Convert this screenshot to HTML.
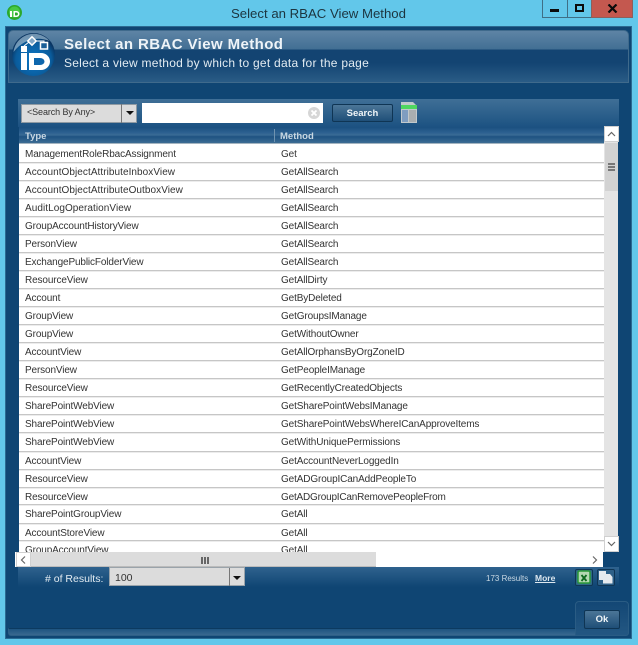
<!DOCTYPE html>
<html>
<head>
<meta charset="utf-8">
<style>
html,body{margin:0;padding:0;width:638px;height:645px;overflow:hidden;background:#62c7ea;font-family:"Liberation Sans",sans-serif;}
.a{position:absolute;box-sizing:border-box;}
.t{position:absolute;white-space:nowrap;}
.row{position:absolute;left:0;width:585px;height:18px;box-sizing:border-box;border-bottom:1px solid #c6c6c6;box-shadow:0 1px 0 #ececec;font-size:10px;color:#333;letter-spacing:-.13px;line-height:18px;white-space:nowrap;}
.row span{position:absolute;top:1px;}
.row span:first-child{left:6px;}
.row span:last-child{left:262px;}
.w span:first-child{letter-spacing:.06px;}
</style>
</head>
<body>
<div class="a" style="left:0;top:0;width:638px;height:645px;overflow:hidden">
<!-- title bar -->
<svg class="a" style="left:6px;top:4px" width="17" height="17" viewBox="0 0 17 17"><circle cx="8.500" cy="8.500" r="7.500" fill="#2ca82c"/><circle cx="8.500" cy="8" r="5.500" fill="#47c944"/><rect x="4" y="7" width="2" height="6" fill="#fff"/><path d="M7.500 7h3a3 3 0 0 1 0 6h-3z" fill="#fff"/><path d="M9 8.500h1.400a1.500 1.500 0 0 1 0 3H9z" fill="#2ca82c"/></svg>
<div class="t" style="left:231px;top:5px;font-size:13.200px;color:#1c3540;line-height:17px">Select an RBAC View Method</div>
<div class="a" style="left:542px;top:0;width:91px;height:18px;background:#62c7ea;border:1px solid #3f6f86;border-top:0"></div>
<div class="a" style="left:567px;top:0;width:1px;height:18px;background:#3f6f86"></div>
<div class="a" style="left:591px;top:0;width:42px;height:18px;background:#c4584f;border:1px solid #8c5f5c;border-top:0"></div>
<div class="a" style="left:550px;top:9px;width:9px;height:3px;background:#0b0b0b"></div>
<div class="a" style="left:575px;top:4px;width:9px;height:8px;border:2px solid #0b0b0b"></div>
<svg class="a" style="left:607px;top:4px" width="11" height="9" viewBox="0 0 11 9"><path d="M1.500 .5L9.500 8.500M9.500 .5L1.500 8.500" stroke="#0b0b0b" stroke-width="2.200" fill="none"/></svg>

<!-- window body -->
<div class="a" style="left:5px;top:26px;width:627px;height:613px;background:#0f4573;border:1px solid #2b6a92"></div>

<!-- header panel -->
<div class="a" style="left:8px;top:30px;width:621px;height:53px;border-radius:5px 5px 0 0;border:1px solid #3f6a8c;background:linear-gradient(to bottom,#5e84a5 0,#426f94 18px,#134472 19px,#134472 32px,#2b5d87 52px)"></div>
<svg class="a" style="left:11px;top:31px" width="48" height="48" viewBox="0 0 48 48">
<defs><radialGradient id="g" cx=".5" cy=".62" r=".55"><stop offset="0" stop-color="#0d78c8"/><stop offset=".75" stop-color="#0a5c9c"/><stop offset="1" stop-color="#0a3562"/></radialGradient></defs>
<circle cx="22.500" cy="23.500" r="21.500" fill="url(#g)"/>
<path d="M2.500 21a20.500 20.500 0 0 1 36-11c-12-5-26-2-36 11z" fill="#a9c7dc" opacity=".65"/>
<path d="M13 15L18 11M24 10h9v2" stroke="#fff" stroke-width="1" fill="none"/>
<rect x="10" y="15" width="6" height="6" fill="#fff"/>
<rect x="18" y="7" width="6" height="6" fill="#7fa6c6" stroke="#fff" stroke-width="1.500" transform="rotate(45 21 10)"/>
<rect x="29.500" y="11.500" width="7" height="6.500" fill="#1a5f98" stroke="#fff" stroke-width="1.500"/>
<rect x="10" y="22" width="6" height="17" fill="#fff"/>
<path d="M18 22h12a9 8.500 0 0 1 0 17H18z" fill="#fff"/>
<path d="M23 27h6a4.500 3.500 0 0 1 0 7h-6z" fill="#0d66ad"/>
</svg>
<div class="t" style="left:64px;top:36px;font-size:15px;font-weight:bold;color:#eef4f8;line-height:17px;letter-spacing:.4px">Select an RBAC View Method</div>
<div class="t" style="left:64px;top:56px;font-size:12px;color:#e3ecf2;line-height:14px;letter-spacing:.25px">Select a view method by which to get data for the page</div>

<!-- toolbar -->
<div class="a" style="left:18px;top:99px;width:601px;height:28px;background:linear-gradient(to bottom,#3f6f96,#1c5282)"></div>
<div class="a" style="left:21px;top:104px;width:116px;height:19px;background:#dcdcdc;border:1px solid #8f9aa3"></div>
<div class="a" style="left:121px;top:104px;width:1px;height:19px;background:#777"></div>
<div class="t" style="left:27px;top:106px;font-size:9px;color:#333;line-height:12px;letter-spacing:-.1px">&lt;Search By Any&gt;</div>
<div class="a" style="left:126px;top:111px;width:0;height:0;border:4px solid transparent;border-top:4px solid #111;border-bottom:0"></div>
<div class="a" style="left:142px;top:103px;width:181px;height:20px;background:#fff"></div>
<svg class="a" style="left:307px;top:106px" width="14" height="14" viewBox="0 0 14 14"><circle cx="7" cy="7" r="6" fill="#d6d6d6"/><path d="M4.500 4.500l5 5M9.500 4.500l-5 5" stroke="#fff" stroke-width="1.800"/></svg>
<div class="a" style="left:332px;top:104px;width:61px;height:18px;border:1px solid #0f3554;border-radius:2px;background:linear-gradient(to bottom,#4b7597,#1f4f78);color:#f0f5f8;font-size:9.500px;font-weight:bold;line-height:18px;text-align:center">Search</div>
<svg class="a" style="left:400px;top:101px" width="18" height="23" viewBox="0 0 18 23"><path d="M1 1h12l4 4v17H1z" fill="#c2c9cc"/><rect x="1" y="4" width="16" height="4" fill="#4fd760"/><rect x="2" y="9" width="6" height="12" fill="#7f9dc0"/><rect x="9" y="9" width="7" height="12" fill="#a9aeb0"/></svg>

<!-- table header -->
<div class="a" style="left:19px;top:127px;width:585px;height:17px;background:linear-gradient(to bottom,#1b5080 0,#2c6090 35%,#3a6b95 50%,#1e5282 60%,#3c6c94 100%);border-bottom:1px solid #a4b4c0"></div>
<div class="a" style="left:274px;top:129px;width:1px;height:13px;background:#6f93b0"></div>
<div class="t" style="left:25px;top:131px;font-size:9.500px;font-weight:bold;color:#c9d8e3;line-height:12px">Type</div>
<div class="t" style="left:280px;top:131px;font-size:9.500px;font-weight:bold;color:#c9d8e3;line-height:12px">Method</div>

<!-- rows -->
<div class="a" style="left:19px;top:144px;width:585px;height:408px;overflow:hidden;background:#fff">
<div class="row" style="top:1px"><span>ManagementRoleRbacAssignment</span><span>Get</span></div>
<div class="row w" style="top:19px"><span>AccountObjectAttributeInboxView</span><span>GetAllSearch</span></div>
<div class="row w" style="top:37px"><span>AccountObjectAttributeOutboxView</span><span>GetAllSearch</span></div>
<div class="row w" style="top:55px"><span>AuditLogOperationView</span><span>GetAllSearch</span></div>
<div class="row" style="top:73px"><span>GroupAccountHistoryView</span><span>GetAllSearch</span></div>
<div class="row" style="top:91px"><span>PersonView</span><span>GetAllSearch</span></div>
<div class="row" style="top:109px"><span>ExchangePublicFolderView</span><span>GetAllSearch</span></div>
<div class="row" style="top:127px"><span>ResourceView</span><span>GetAllDirty</span></div>
<div class="row" style="top:145px"><span>Account</span><span>GetByDeleted</span></div>
<div class="row" style="top:163px"><span>GroupView</span><span>GetGroupsIManage</span></div>
<div class="row" style="top:181px"><span>GroupView</span><span>GetWithoutOwner</span></div>
<div class="row" style="top:199px"><span>AccountView</span><span>GetAllOrphansByOrgZoneID</span></div>
<div class="row" style="top:217px"><span>PersonView</span><span>GetPeopleIManage</span></div>
<div class="row" style="top:235px"><span>ResourceView</span><span>GetRecentlyCreatedObjects</span></div>
<div class="row" style="top:253px"><span>SharePointWebView</span><span>GetSharePointWebsIManage</span></div>
<div class="row" style="top:271px"><span>SharePointWebView</span><span>GetSharePointWebsWhereICanApproveItems</span></div>
<div class="row" style="top:289px;height:19px"><span>SharePointWebView</span><span>GetWithUniquePermissions</span></div>
<div class="row" style="top:308px"><span>AccountView</span><span>GetAccountNeverLoggedIn</span></div>
<div class="row" style="top:326px"><span>ResourceView</span><span>GetADGroupICanAddPeopleTo</span></div>
<div class="row" style="top:344px;height:17px"><span>ResourceView</span><span style="letter-spacing:-.2px">GetADGroupICanRemovePeopleFrom</span></div>
<div class="row" style="top:361px;height:19px"><span>SharePointGroupView</span><span>GetAll</span></div>
<div class="row" style="top:380px;height:17px"><span>AccountStoreView</span><span>GetAll</span></div>
<div class="row" style="top:397px;height:11px;border:0;box-shadow:none"><span>GroupAccountView</span><span>GetAll</span></div>
</div>

<!-- vertical scrollbar -->
<div class="a" style="left:604px;top:126px;width:14px;height:426px;background:#e4e4e4"></div>
<div class="a" style="left:604px;top:126px;width:15px;height:16px;background:#fff;border:1px solid #d0d0d0"></div>
<svg class="a" style="left:607px;top:131px" width="9" height="6" viewBox="0 0 9 6"><path d="M1 5l3.500-3.500L8 5" stroke="#666" stroke-width="1.200" fill="none"/></svg>
<div class="a" style="left:605px;top:143px;width:13px;height:48px;background:#d2d2d2"></div>
<div class="a" style="left:608px;top:163px;width:7px;height:8px;background:repeating-linear-gradient(to bottom,#777 0,#777 2px,#d2d2d2 2px,#d2d2d2 3px)"></div>
<div class="a" style="left:604px;top:536px;width:15px;height:16px;background:#fff;border:1px solid #d0d0d0"></div>
<svg class="a" style="left:607px;top:541px" width="9" height="6" viewBox="0 0 9 6"><path d="M1 1l3.500 3.500L8 1" stroke="#666" stroke-width="1.200" fill="none"/></svg>

<!-- horizontal scrollbar -->
<div class="a" style="left:15px;top:552px;width:588px;height:15px;background:#fff"></div>
<div class="a" style="left:16px;top:552px;width:15px;height:15px;background:#fff;border:1px solid #d0d0d0"></div>
<svg class="a" style="left:20px;top:556px" width="6" height="8" viewBox="0 0 6 8"><path d="M5 .5L1.500 4 5 7.500" stroke="#666" stroke-width="1.200" fill="none"/></svg>
<div class="a" style="left:31px;top:552px;width:345px;height:15px;background:#dcdcdc;border-bottom:1px solid #bbb"></div>
<div class="a" style="left:201px;top:557px;width:8px;height:7px;background:repeating-linear-gradient(to right,#666 0,#666 2px,#dcdcdc 2px,#dcdcdc 3px)"></div>
<svg class="a" style="left:592px;top:556px" width="6" height="8" viewBox="0 0 6 8"><path d="M1 .5L4.500 4 1 7.500" stroke="#666" stroke-width="1.200" fill="none"/></svg>

<!-- footer strip -->
<div class="a" style="left:18px;top:567px;width:601px;height:20px;background:linear-gradient(to bottom,#2f628e,#0f4573)"></div>
<div class="t" style="left:45px;top:573px;font-size:10.500px;color:#e3ecf2;line-height:13px"># of Results:</div>
<div class="a" style="left:109px;top:567px;width:136px;height:19px;background:#dcdcdc;border:1px solid #9aa3aa"></div>
<div class="a" style="left:229px;top:568px;width:1px;height:18px;background:#777"></div>
<div class="t" style="left:115px;top:572px;font-size:10.500px;color:#333;line-height:13px">100</div>
<div class="a" style="left:233px;top:576px;width:0;height:0;border:4px solid transparent;border-top:4px solid #111;border-bottom:0"></div>
<div class="t" style="left:486px;top:573px;font-size:8px;color:#c9d8e3;line-height:11px">173 Results</div>
<div class="t" style="left:535px;top:573px;font-size:8.500px;font-weight:bold;color:#dce7ef;line-height:11px;text-decoration:underline">More</div>
<div class="a" style="left:575px;top:569px;width:18px;height:17px;background:#2e6a84;border:1px solid #0f3554;border-radius:2px"></div>
<svg class="a" style="left:577px;top:570px" width="14" height="14" viewBox="0 0 14 14"><rect x="1" y="1" width="12" height="12" rx="1.500" fill="#b4d9b2" stroke="#2b9a38" stroke-width="1.500"/><path d="M4.500 5l5 6M9.500 5l-5 6" stroke="#0f6a20" stroke-width="1.800"/></svg>
<div class="a" style="left:597px;top:569px;width:18px;height:17px;background:#2e6088;border:1px solid #0f3554;border-radius:2px"></div>
<svg class="a" style="left:599px;top:570px" width="14" height="14" viewBox="0 0 14 14"><path d="M0 1h7v3h4l2.500 3v6.500H4V10H0z" fill="#e6eaee"/></svg>

<!-- bottom bar -->
<div class="a" style="left:8px;top:628px;width:568px;height:8px;background:linear-gradient(to bottom,#1e5481,#39688f);border:1px solid #2e5f86;border-top-color:#0c3a60;border-radius:0 0 0 3px"></div>
<div class="a" style="left:575px;top:601px;width:54px;height:35px;border-radius:4px 4px 3px 0;background:linear-gradient(to bottom,#134775,#235782);border:1px solid #2a5c84"></div>
<div class="a" style="left:584px;top:610px;width:36px;height:19px;border:1px solid #0f3554;border-radius:2px;background:linear-gradient(to bottom,#4b7597,#1f4f78);color:#f0f5f8;font-size:9.500px;font-weight:bold;line-height:18px;text-align:center">Ok</div>
</div>
</body>
</html>
